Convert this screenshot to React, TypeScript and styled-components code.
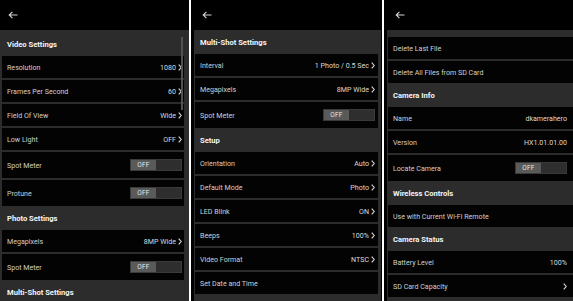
import React from 'react';
import styled, { createGlobalStyle } from 'styled-components';

const GlobalStyle = createGlobalStyle`
  html, body {
    margin: 0;
    padding: 0;
    background: #fff;
    overflow: hidden;
  }
  body {
    font-family: Roboto, "Liberation Sans", Arial, sans-serif;
  }
`;

const Screens = styled.div`
  display: flex;
  gap: 2px;
  width: 573px;
  height: 301px;
  overflow: hidden;
  background: #fff;
`;

const Phone = styled.div<{ $w: number }>`
  position: relative;
  flex: 0 0 ${p => p.$w}px;
  display: flex;
  flex-direction: column;
  background: #000;
  overflow: hidden;
`;

const TopBar = styled.div<{ $pl: number }>`
  flex: 0 0 30px;
  display: flex;
  align-items: center;
  padding-left: ${p => p.$pl}px;
`;

const Body = styled.div<{ $bl: number; $br: number; $pl: number; $pr: number; $pt: number; $rowPr: number }>`
  --row-pr: ${p => p.$rowPr}px;
  flex: 1;
  min-height: 0;
  background: #2c2c2c;
  border-left: ${p => p.$bl}px solid #000;
  border-right: ${p => p.$br}px solid #000;
  padding: ${p => p.$pt}px ${p => p.$pr}px 0 ${p => p.$pl}px;
  display: flex;
  flex-direction: column;
  overflow: hidden;
`;

const Group = styled.div`
  display: flex;
  flex-direction: column;
  gap: 2px;
`;

const SectionTitle = styled.div`
  flex: 0 0 24px;
  display: flex;
  align-items: center;
  padding-left: 5px;
  margin-bottom: -2px;
  font-size: 7.6px;
  font-weight: 700;
  color: #f4f4f4;
`;

const Row = styled.div<{ $tall?: boolean }>`
  flex: 0 0 ${p => (p.$tall ? 26 : 22)}px;
  display: flex;
  align-items: center;
  justify-content: space-between;
  padding: 0 var(--row-pr) 0 5px;
  background: #030303;
  font-size: 7.1px;
  color: #d0d0d0;
  white-space: nowrap;
`;

const Value = styled.span`
  display: flex;
  align-items: center;
  gap: 2px;
  color: #dadada;
`;

const Switch = styled.div`
  display: flex;
  width: 52px;
  height: 12px;
  box-sizing: border-box;
  background: #2e2e2e;
  border: 1px solid #3a3a3a;
`;

const SwitchKnob = styled.div`
  width: 25px;
  display: flex;
  align-items: center;
  justify-content: center;
  background: #5a5a5a;
  font-size: 6.5px;
  color: #e4e4e4;
  letter-spacing: 0.2px;
`;

const ScrollThumb = styled.div`
  position: absolute;
  left: 181px;
  top: 37px;
  width: 2px;
  height: 73px;
  background: #525252;
`;

type Item = { label: string; value?: string; chevron?: boolean; toggle?: boolean };
type Section = { title?: string; rows: Item[] };

const BackArrow = () => (
  <svg width="10" height="8" viewBox="0 0 10 8" fill="none">
    <path d="M9.5 4H1.2M4.4 0.8L1.2 4l3.2 3.2" stroke="#d4d4d4" strokeWidth="1.1" />
  </svg>
);

const Chevron = () => (
  <svg width="4" height="7" viewBox="0 0 4 7" fill="none">
    <path d="M0.7 0.7L3.2 3.5L0.7 6.3" stroke="#dcdcdc" strokeWidth="1.1" />
  </svg>
);

const SettingRow: React.FC<{ item: Item }> = ({ item }) => (
  <Row $tall={item.toggle}>
    <span>{item.label}</span>
    {item.toggle ? (
      <Switch>
        <SwitchKnob>OFF</SwitchKnob>
      </Switch>
    ) : (
      <Value>
        {item.value}
        {item.chevron && <Chevron />}
      </Value>
    )}
  </Row>
);

const screen1: Section[] = [
  {
    title: 'Video Settings',
    rows: [
      { label: 'Resolution', value: '1080', chevron: true },
      { label: 'Frames Per Second', value: '60', chevron: true },
      { label: 'Field Of View', value: 'Wide', chevron: true },
      { label: 'Low Light', value: 'OFF', chevron: true },
      { label: 'Spot Meter', toggle: true },
      { label: 'Protune', toggle: true },
    ],
  },
  {
    title: 'Photo Settings',
    rows: [
      { label: 'Megapixels', value: '8MP Wide', chevron: true },
      { label: 'Spot Meter', toggle: true },
    ],
  },
  { title: 'Multi-Shot Settings', rows: [] },
];

const screen2: Section[] = [
  {
    title: 'Multi-Shot Settings',
    rows: [
      { label: 'Interval', value: '1 Photo / 0.5 Sec', chevron: true },
      { label: 'Megapixels', value: '8MP Wide', chevron: true },
      { label: 'Spot Meter', toggle: true },
    ],
  },
  {
    title: 'Setup',
    rows: [
      { label: 'Orientation', value: 'Auto', chevron: true },
      { label: 'Default Mode', value: 'Photo', chevron: true },
      { label: 'LED Blink', value: 'ON', chevron: true },
      { label: 'Beeps', value: '100%', chevron: true },
      { label: 'Video Format', value: 'NTSC', chevron: true },
      { label: 'Set Date and Time' },
    ],
  },
];

const screen3: Section[] = [
  {
    rows: [{ label: 'Delete Last File' }, { label: 'Delete All Files from SD Card' }],
  },
  {
    title: 'Camera Info',
    rows: [
      { label: 'Name', value: 'dkamerahero' },
      { label: 'Version', value: 'HX1.01.01.00' },
      { label: 'Locate Camera', toggle: true },
    ],
  },
  {
    title: 'Wireless Controls',
    rows: [{ label: 'Use with Current Wi-Fi Remote' }],
  },
  {
    title: 'Camera Status',
    rows: [
      { label: 'Battery Level', value: '100%' },
      { label: 'SD Card Capacity', chevron: true },
    ],
  },
];

const Sections: React.FC<{ data: Section[] }> = ({ data }) => (
  <>
    {data.map((s, i) => (
      <Group key={i}>
        {s.title && <SectionTitle>{s.title}</SectionTitle>}
        {s.rows.map((r, j) => (
          <SettingRow key={j} item={r} />
        ))}
      </Group>
    ))}
  </>
);

const App: React.FC = () => {
  return (
    <>
      <GlobalStyle />
      <Screens>
        <Phone $w={189}>
          <TopBar $pl={8}>
            <BackArrow />
          </TopBar>
          <Body $bl={0} $br={0} $pl={2} $pr={5} $pt={2} $rowPr={2}>
            <Sections data={screen1} />
          </Body>
          <ScrollThumb />
        </Phone>
        <Phone $w={191}>
          <TopBar $pl={11}>
            <BackArrow />
          </TopBar>
          <Body $bl={3} $br={1} $pl={1} $pr={3} $pt={0} $rowPr={3}>
            <Sections data={screen2} />
          </Body>
        </Phone>
        <Phone $w={189}>
          <TopBar $pl={11}>
            <BackArrow />
          </TopBar>
          <Body $bl={3} $br={0} $pl={1} $pr={0} $pt={7} $rowPr={6}>
            <Sections data={screen3} />
          </Body>
        </Phone>
      </Screens>
    </>
  );
};

export default App;
